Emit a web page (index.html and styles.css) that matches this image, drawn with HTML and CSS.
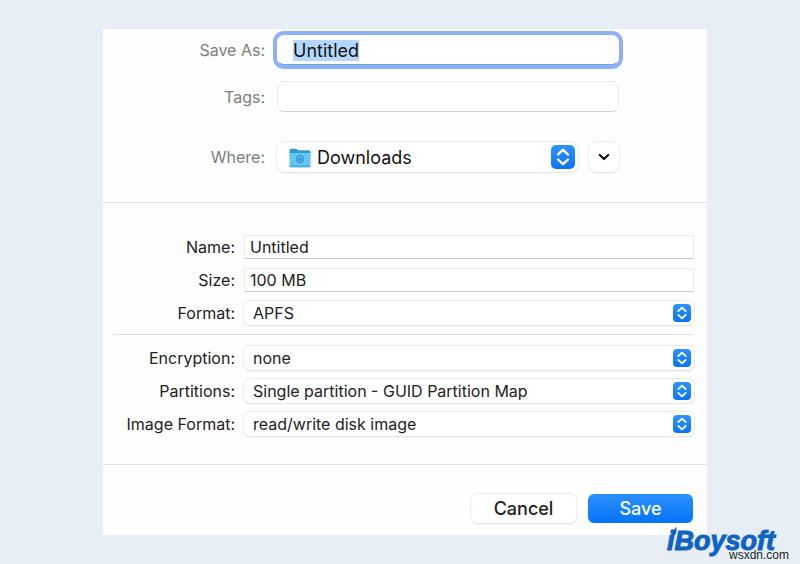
FILE: index.html
```
<!DOCTYPE html>
<html lang="en">
    <head>
        <meta charset="utf-8">
        <title>New Blank Image</title>
        <link rel="stylesheet" href="styles.css">
    </head>
    <body>
        <svg class="sprites" width="0" height="0" aria-hidden="true">
            <symbol id="arrows" viewBox="0 0 24 24">
                <path d="M7 9.500 12 4.800l5 4.700M7 14.500 12 19.200l5-4.700" fill="none" stroke="#fff" stroke-width="2.400" stroke-linecap="round" stroke-linejoin="round"/>
            </symbol>
        </svg>

        <form class="dialog">
            <div class="save-section">
                <label for="saveAs">Save As:</label>
                <input class="field focused" id="saveAs" type="text" value="Untitled" autofocus>

                <label for="tags">Tags:</label>
                <input class="field tags" id="tags" type="text">

                <label for="where">Where:</label>
                <div class="where-row">
                    <div class="popup big">
                        <select id="where"><option>Downloads</option></select>
                        <svg class="folder" viewBox="0 0 22 20" aria-hidden="true">
                            <path d="M0.500 2.500Q.5.800 2.200.8H6.500Q7.500.8 8.300 1.600L9 2.300H20Q21.500 2.300 21.500 4V8H.5z" fill="#2f9bcb"/>
                            <path d="M.5 5H21.500V17.500Q21.500 19.300 19.800 19.300H2.200Q.5 19.300.5 17.500z" fill="#65c6f2"/>
                            <path d="M.5 17.500Q.5 19.300 2.200 19.300H19.800Q21.500 19.300 21.500 17.500V17.300H.5z" fill="#4aaede"/>
                            <circle cx="11" cy="11" r="3.600" fill="#55b4e3" stroke="#3298cc" stroke-width="1.200"/>
                            <path d="M11 9v3.500M9.500 11.200 11 12.700l1.500-1.500" fill="none" stroke="#2b8fc2" stroke-width="1"/>
                        </svg>
                        <svg class="arrows"><use href="#arrows"/></svg>
                    </div>
                    <button class="expand" type="button" aria-label="Show more">
                        <svg viewBox="0 0 12 8" width="12" height="8"><path d="M1.800 2 6 6l4.200-4" fill="none" stroke="#111" stroke-width="2.200" stroke-linecap="round" stroke-linejoin="round"/></svg>
                    </button>
                </div>
            </div>

            <div class="image-section">
                <div class="rows">
                    <label for="name">Name:</label>
                    <input class="plain" id="name" type="text" value="Untitled">

                    <label for="size">Size:</label>
                    <input class="plain" id="size" type="text" value="100 MB">

                    <label for="format">Format:</label>
                    <div class="popup">
                        <select id="format"><option>APFS</option></select>
                        <svg class="arrows"><use href="#arrows"/></svg>
                    </div>
                </div>
                <hr>
                <div class="rows">
                    <label for="encryption">Encryption:</label>
                    <div class="popup">
                        <select id="encryption"><option>none</option></select>
                        <svg class="arrows"><use href="#arrows"/></svg>
                    </div>

                    <label for="partitions">Partitions:</label>
                    <div class="popup">
                        <select id="partitions"><option>Single partition - GUID Partition Map</option></select>
                        <svg class="arrows"><use href="#arrows"/></svg>
                    </div>

                    <label for="imageFormat">Image Format:</label>
                    <div class="popup">
                        <select id="imageFormat"><option>read/write disk image</option></select>
                        <svg class="arrows"><use href="#arrows"/></svg>
                    </div>
                </div>
            </div>

            <div class="buttons">
                <button class="btn" type="button">Cancel</button>
                <button class="btn save" type="button">Save</button>
            </div>
        </form>

        <div class="brand">
            <svg class="flame" viewBox="0 0 6 10" aria-hidden="true"><path d="M5.500 0C5 2.500 6 4 5.300 6.500 4.800 8.500 3.500 10 1.500 9.500-.5 8.500.5 6 2 4.500 3.500 3 4.800 2 5.500 0z" fill="#0f63c4"/></svg>
            <span class="logo">iBoysoft</span>
            <span class="site">wsxdn.com</span>
        </div>

        <script>
            document.getElementById('saveAs').focus();
            document.getElementById('saveAs').select();
        </script>
    </body>
</html>
```
FILE: styles.css
```
* {
    box-sizing: border-box;
}

body {
    margin: 0;
    padding: 29px 93px 29px 103px;
    min-height: 100vh;
    position: relative;
    background: #e7eef5;
    font-family: Inter, "Liberation Sans", sans-serif;
    font-size: 16px;
    color: #222;
}

.sprites {
    position: absolute;
}

input, select, button {
    font-family: inherit;
    font-size: inherit;
    color: inherit;
    margin: 0;
    outline: none;
}

label {
    text-align: right;
}

.dialog {
    background: #fefefe;
}

/* top part */
.save-section {
    display: grid;
    grid-template-columns: 162px 1fr;
    column-gap: 12px;
    align-items: center;
    padding: 6px 88px 30px 0;
    border-bottom: 1px solid #e0e0e0;
}
.save-section label {
    color: #7d7d7d;
}

.field {
    width: 100%;
    height: 31px;
    padding: 0 15px;
    font-size: 18px;
    color: #111;
    background: #fff;
    border: 1px solid #ececec;
    border-bottom-color: #cfcfcf;
    border-radius: 7px;
}
.focused {
    height: 30px;
    border-color: #fff;
    border-bottom-color: #7ba2e0;
    box-shadow: 0 0 0 4px #8bb2f6;
}
.focused::selection {
    background: #b3d7ff;
    color: #111;
}
.tags {
    margin: 16px 0 30px;
}
.save-section label[for="tags"] {
    margin: 16px 0 30px;
}

.where-row {
    display: flex;
    gap: 11px;
}

/* pop up menus */
.popup {
    position: relative;
    flex: 1;
}
.popup select {
    display: block;
    appearance: none;
    width: 100%;
    height: 24px;
    padding: 0 30px 0 9px;
    background: #fff;
    border: none;
    border-radius: 6px;
    box-shadow: 0 0 1px 1px #ececec, 0 1px 1px #bdbdbd;
}
.popup .arrows {
    position: absolute;
    right: 3px;
    top: 3px;
    width: 18px;
    height: 18px;
    border-radius: 4px;
    background: linear-gradient(#2f93ff, #0a74f8);
    pointer-events: none;
}
.popup.big select {
    height: 30px;
    padding-left: 40px;
    font-size: 18px;
    color: #111;
    border-radius: 7px;
}
.popup.big .arrows {
    width: 24px;
    height: 24px;
    border-radius: 5px;
}
.folder {
    position: absolute;
    left: 12px;
    top: 6px;
    width: 22px;
    height: 20px;
    pointer-events: none;
}

.expand {
    display: flex;
    align-items: center;
    justify-content: center;
    width: 30px;
    height: 30px;
    padding: 0;
    background: #fff;
    border: none;
    border-radius: 7px;
    box-shadow: 0 0 1px 1px #ececec, 0 1px 1px #bdbdbd;
}

/* disk image settings */
.image-section {
    padding: 32px 13px 28px 10px;
}
.rows {
    display: grid;
    grid-template-columns: 122px 1fr;
    column-gap: 9px;
    row-gap: 9px;
    align-items: center;
}
.plain {
    width: 100%;
    height: 24px;
    padding: 0 5px;
    background: #fff;
    border: 1px solid #ececec;
    border-bottom-color: #c8c8c8;
}
hr {
    margin: 9px 0 11px;
    border: none;
    border-top: 1px solid #e0e0e0;
}

.buttons {
    display: flex;
    justify-content: flex-end;
    gap: 12px;
    padding: 29px 14px 12px;
    border-top: 1px solid #e0e0e0;
}
.btn {
    width: 105px;
    height: 29px;
    padding: 0;
    font-size: 18px;
    font-weight: 500;
    background: #fff;
    border: none;
    border-radius: 6px;
    box-shadow: 0 0 1px 1px #ececec, 0 1px 1px #bdbdbd;
}
.save {
    color: #fff;
    background: linear-gradient(#2d90ff, #0473fb);
    box-shadow: none;
}

/* watermark over the corner */
.brand {
    position: absolute;
    right: 11px;
    bottom: 2px;
    width: 122px;
    height: 36px;
}
.logo {
    position: absolute;
    left: 0;
    top: 0;
    font-family: "Liberation Sans", Arial, sans-serif;
    font-size: 27px;
    line-height: 30px;
    font-weight: bold;
    font-style: italic;
    color: #0f63c4;
    -webkit-text-stroke: 1px #0f63c4;
}
.flame {
    position: absolute;
    left: 4px;
    top: 0;
    width: 6px;
    height: 10px;
}
.site {
    position: absolute;
    right: 0;
    bottom: 0;
    font-family: "Liberation Sans", Arial, sans-serif;
    font-size: 12px;
    line-height: 14px;
    color: #222;
}
```
